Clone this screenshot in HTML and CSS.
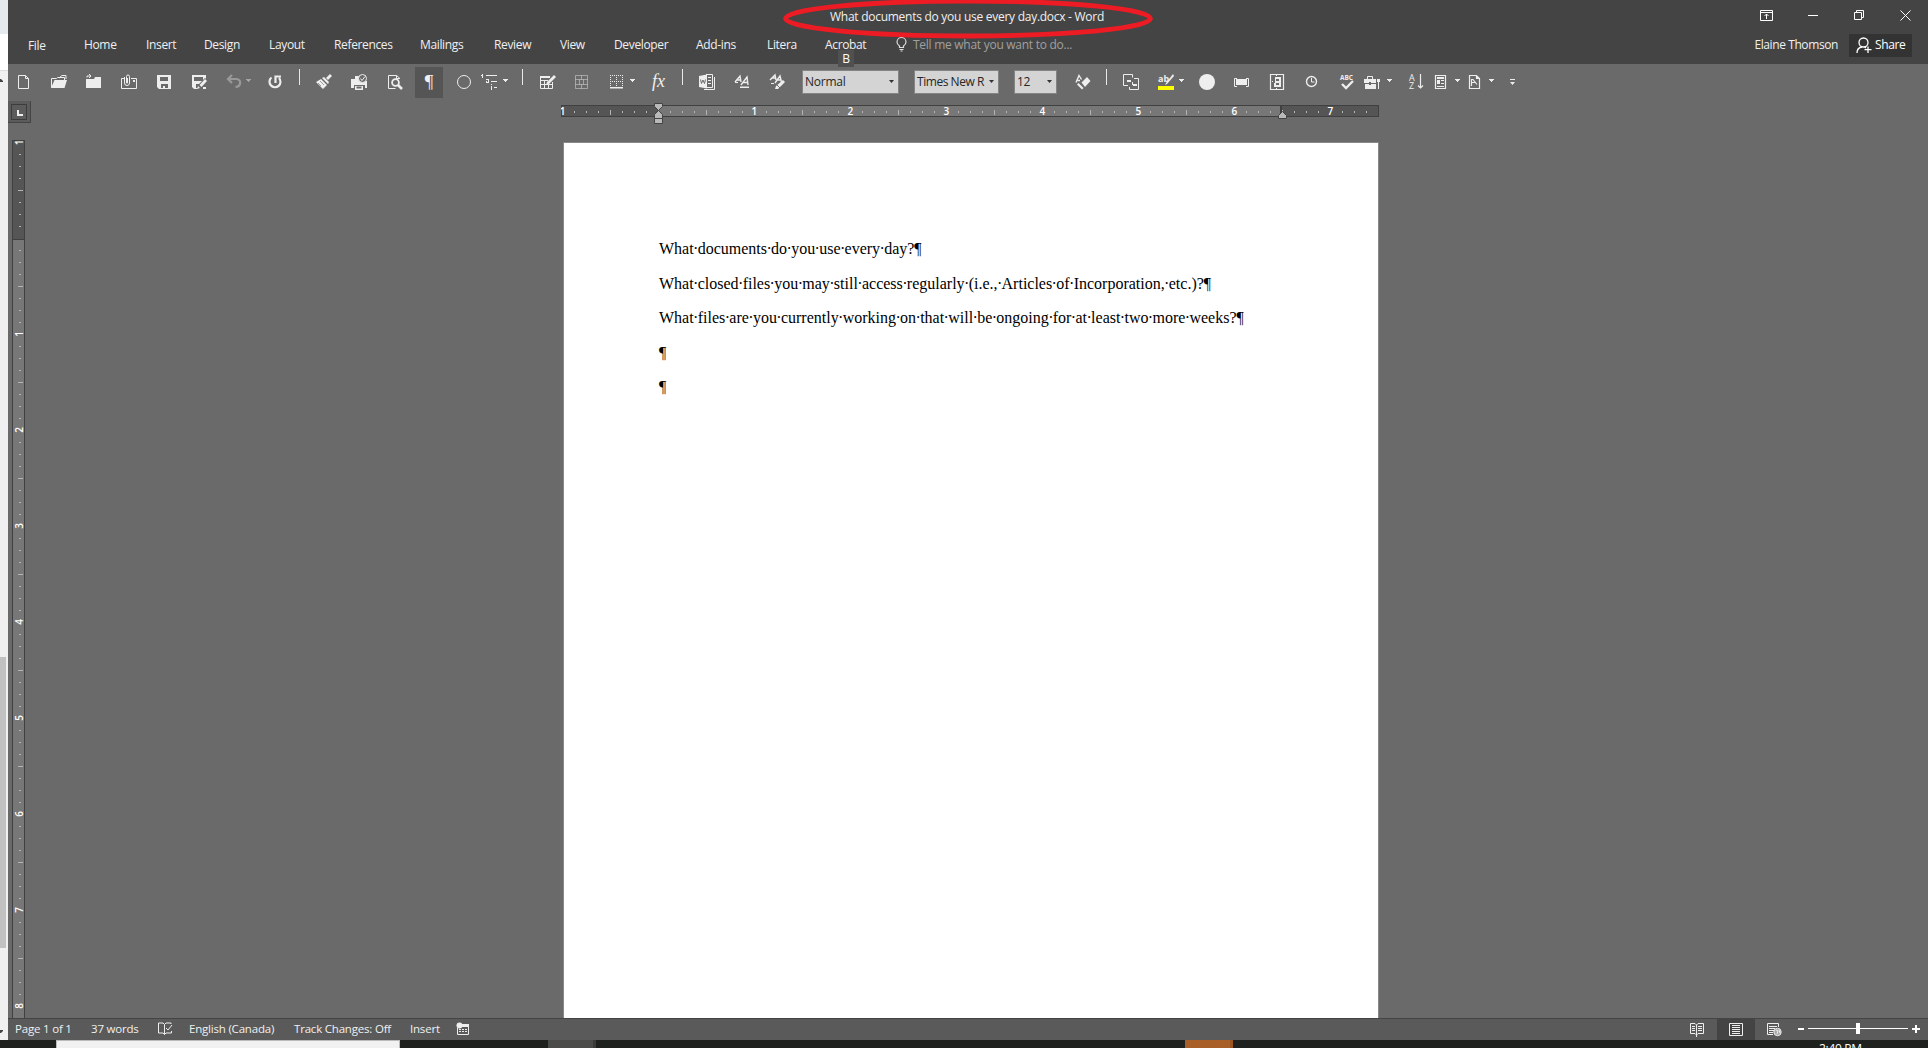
FILE: index.html
```html
<!DOCTYPE html>
<html lang="en">
<head>
    <meta charset="UTF-8">
    <title>What documents do you use every day.docx - Word</title>
    <link rel="stylesheet" href="styles.css">
</head>
<body>
    <svg class="defs" width="0" height="0">
        <symbol id="arrow" viewBox="0 0 7 4"><path fill="#eee" d="M0 0h5v1H4v1H3v1H2V2H1V1H0z"/></symbol>
        <pattern id="ticksH" width="96" height="25" patternUnits="userSpaceOnUse" x="1">
            <path fill="#b4b4b4" d="M12 10h1v2h-1zM24 10h1v2h-1zM36 10h1v2h-1zM48 9h1v5h-1zM60 10h1v2h-1zM72 10h1v2h-1zM84 10h1v2h-1z"/>
        </pattern>
        <pattern id="ticksV" width="13" height="96" patternUnits="userSpaceOnUse" y="2">
            <path fill="#b4b4b4" d="M7 12h2v1H7zM7 24h2v1H7zM7 36h2v1H7zM6 48h5v1H6zM7 60h2v1H7zM7 72h2v1H7zM7 84h2v1H7z"/>
        </pattern>
    </svg>

    <div class="screen">
        <div class="behind">
            <div class="behind-top"></div>
            <div class="behind-white"></div>
            <div class="scroll">
                <svg class="scroll-up" width="4" height="4"><path fill="#444" d="M0 0h1l2 2v1H0z"/></svg>
                <div class="scroll-thumb"></div>
                <svg class="scroll-down" width="4" height="4"><path fill="#444" d="M0 0h3v1L1 3H0z"/></svg>
            </div>
        </div>

        <div class="window">
            <header class="header">
                <div class="titlebar">
                    <span class="title">What documents do you use every day.docx - Word</span>
                    <div class="controls">
                        <svg width="13" height="11" fill="none" stroke="#fff"><path d="M.5.5h12v10H.5zM0 2.500h13M6.500 9V4M4.500 6l2-2 2 2"/></svg>
                        <svg width="10" height="11" stroke="#fff"><path d="M0 5.500h10"/></svg>
                        <svg width="10" height="11" fill="none" stroke="#fff"><path d="M.5 2.500h7v7h-7zM2.500 2V.5h7v7H8"/></svg>
                        <svg width="11" height="11" stroke="#fff"><path d="M.5.5l10 10M10.500.5l-10 10"/></svg>
                    </div>
                </div>
                <div class="tabs-row">
                    <nav class="tabs">
                        <span class="file">File</span>
                        <span>Home</span>
                        <span>Insert</span>
                        <span>Design</span>
                        <span>Layout</span>
                        <span>References</span>
                        <span>Mailings</span>
                        <span>Review</span>
                        <span>View</span>
                        <span>Developer</span>
                        <span>Add-ins</span>
                        <span>Litera</span>
                        <span class="acrobat">Acrobat<b class="keytip">B</b></span>
                        <svg width="11" height="15" fill="none" stroke="#ddd" stroke-width="1.2"><path d="M3.500 10.500V9C2 8 1 6.500 1 5a4.500 4.500 0 0 1 9 0c0 1.500-1 3-2.500 4v1.500zM3.500 12.500h4M4.500 14h2"/></svg>
                        <span class="tellme">Tell me what you want to do...</span>
                    </nav>
                    <div class="account">
                        <span class="user">Elaine Thomson</span>
                        <div class="share">
                            <svg width="16" height="17" fill="none" stroke="#fff" stroke-width="1.300"><circle cx="7.500" cy="5.500" r="4.500"/><path d="M1 16c0-3.500 2-5.500 5-6M8.500 10l1.500 1M12 9.500v6.500M8.500 12.700h7"/></svg>
                            <span>Share</span>
                        </div>
                    </div>
                </div>
            </header>

            <div class="toolbar">
                <svg class="ic" viewBox="0 0 16 16"><path class="l" d="M2.500 1.500h7l3 3v10h-10zM9.500 1.500v3h3"/></svg>
                <svg class="ic" viewBox="0 0 16 16"><path class="l" d="M.5 13.500v-9h5l1-1h7v3"/><path class="l" d="M8 4l3-2.500h4V5"/><path class="f" d="M3.500 6H16l-2.500 8H0z"/></svg>
                <svg class="ic" viewBox="0 0 16 16"><path class="f" d="M0 5h8l1-2h6v11H0z"/><path class="l" d="M1 3.500V2h4M3 0l2 2-2 2"/></svg>
                <svg class="ic" viewBox="0 0 16 16"><path class="l" d="M3 4.500H.5v10h15v-10H10"/><path class="l" d="M3.500 3v6a2.500 2.500 0 0 0 5 0V2.500a1.500 1.500 0 0 0-3 0V9h1V4"/><path class="f" d="M12 6h2v2h-2z"/></svg>
                <svg class="ic" viewBox="0 0 16 16"><path class="f" d="M1 1h14v14H3l-2-2zM4 3v4h8V3zM5 10v4h2v-2h2v2h3v-4z" fill-rule="evenodd"/></svg>
                <svg class="ic" viewBox="0 0 16 16"><path class="f" d="M0 1h14v4L9 10H4v4h2v1H2l-2-2zM2 3v4h9V3z" fill-rule="evenodd"/><path d="M5 15l1-4 7-7 3 3-7 7z" fill="#6a6a6a"/><path class="f" d="M5 15l1-3 2 2zM7.500 11l5.500-6 2 2-5.500 6zM11 13h3v2h-3z"/></svg>
                <svg class="ic" viewBox="0 0 16 16"><path d="M6 1L2 5l4 4M2.500 5h8c5 0 5 7.500-1 8" fill="none" stroke="#999" stroke-width="2.200"/></svg>
                <svg class="ar dim" viewBox="0 0 7 4"><use href="#arrow"/></svg>
                <svg class="ic" viewBox="0 0 16 16"><path d="M4.500 3.500a5.500 5.500 0 1 0 7.500.5M8.500 9V2.500H14" fill="none" stroke="#eee" stroke-width="2.200"/></svg>
                <i class="sep"></i>
                <svg class="ic" viewBox="0 0 16 16"><path class="f" d="M0 8l5-3 6 6-4 4zM6 4l2-1 5 5-1 2zM10 4l4-4 2 2-4 4z"/><path d="M2 9l3 3M4 7l4 4" stroke="#6a6a6a" stroke-width=".6"/></svg>
                <svg class="ic" viewBox="0 0 16 16"><path class="f" d="M0 5h4V2h4v5h8v7h-2v-3H3v3H0zM4 12h8v4H4z"/><path d="M5.500 12.500h5v2h-5z" fill="#6a6a6a"/><circle cx="11.500" cy="4.500" r="4" fill="#6a6a6a" stroke="#eee"/><path class="l" d="M9.500 4.500l1.500 2 3-4"/></svg>
                <svg class="ic" viewBox="0 0 16 16"><path class="l" d="M12.500 5V4l-3-2.500h-8v13h7M9.500 1.500v3h3"/><circle cx="8.500" cy="8.500" r="3.400" fill="none" stroke="#eee" stroke-width="1.800"/><path d="M11 11l4 4" stroke="#eee" stroke-width="2.500"/></svg>
                <span class="pilcrow">¶</span>
                <svg class="ic" viewBox="0 0 16 16"><circle class="l" cx="8" cy="8" r="6.500"/></svg>
                <svg class="ic" viewBox="0 0 16 16"><path class="f" d="M1 0h1v4H1zM0 1h1v1H0zM5 5h3v4H5V7h2V6H5zM10 10h1v1h-1zM10 12h1v4h-1zM5 1h11v1H5zM10 7h6v1h-6zM13 13h3v1h-3z"/><path d="M6 7h1v1H6z" fill="#6a6a6a"/></svg>
                <svg class="ar" viewBox="0 0 7 4"><use href="#arrow"/></svg>
                <i class="sep"></i>
                <svg class="ic" viewBox="0 0 16 16"><path class="l" d="M10 2.500H.5v12h12V8M1 6.500h7M1 10.500h11M4.500 7v7M8.500 10v4"/><path class="f" d="M0 2h10v2H0z"/><path d="M6 11l1-3 7-7 2 2-7 7z" class="f"/></svg>
                <svg class="ic dim" viewBox="0 0 16 16"><path class="l" d="M1.500 1.500h12v13h-12zM1.500 5.500h12M1.500 10.500h12M7.500 1.500v4M5.500 5.500v5M9.500 5.500v5M7.500 10.500v4"/></svg>
                <svg class="ic" viewBox="0 0 16 16"><path d="M1 1.500h13M1 7.500h13M1.500 1v13M7.500 1v13M13.500 1v13" stroke="#eee" stroke-dasharray="1 1" fill="none"/><path class="f" d="M1 13h13v1.500H1z"/></svg>
                <svg class="ar" viewBox="0 0 7 4"><use href="#arrow"/></svg>
                <span class="fx">fx</span>
                <i class="sep"></i>
                <svg class="ic" viewBox="0 0 16 16"><path class="l" d="M7 .5h6.500v13H7M15.500 3v12.500H5M9 3.500h3M9 6.500h3M9 9.500h3"/><path class="f" d="M0 2l8-1.500v14L0 13z"/><path d="M1.500 5.500l1 4 1.500-3.500 1.500 3.500 1-4" fill="none" stroke="#6a6a6a"/></svg>
                <svg class="ic" viewBox="0 0 16 16"><path class="l" d="M1 8l5-6 1 6M3 6h3M7 11l6-8 1 8M9 8.500h4.500" stroke-width="1.400"/><path class="f" d="M6 12.500h9v1.500H6zM1 8h3v1H1z"/></svg>
                <svg class="ic" viewBox="0 0 16 16"><path class="l" d="M1 6l5-5 1 5M3 4h3M6 9l5-7 1.500 6M8 6h4" stroke-width="1.400"/><path class="f" d="M6 15l1-3 7-6 2 2-7 7zM2 9h3v1H2z"/><path d="M8 11l3 3" stroke="#6a6a6a"/></svg>
                <div class="combo"><span>Normal</span><svg viewBox="0 0 7 4"><path d="M1 0h5L3.500 3z"/></svg></div>
                <div class="combo times"><span>Times New R</span><svg viewBox="0 0 7 4"><path d="M1 0h5L3.500 3z"/></svg></div>
                <div class="combo size"><span>12</span><svg viewBox="0 0 7 4"><path d="M1 0h5L3.500 3z"/></svg></div>
                <svg class="ic" viewBox="0 0 16 16"><path class="l" d="M1 8.500L4 1.500l2.500 4M2.500 6.500H5" stroke-width="1.400"/><path class="f" d="M6.500 8.500L12 3l3.500 4-5.500 6zM2 10.500l1.500-1.500 5 5-1.500 1.500z"/></svg>
                <i class="sep"></i>
                <svg class="ic" viewBox="0 0 16 16"><path class="l" d="M5 11.500H.5V.5h9v3M9.500 8v3M11 4.500h4.500v11h-9V13"/><path class="f" d="M4 6h4v2H4zM10 10h4v2h-4z"/></svg>
                <svg class="ic" viewBox="0 0 16 16"><text class="small-text" x="0" y="7.500">ab</text><path class="f" d="M15 0l1 2-7 8-2 1 1-2z"/><path fill="#ff0" d="M0 12h16v4H0z"/></svg>
                <svg class="ar" viewBox="0 0 7 4"><use href="#arrow"/></svg>
                <svg class="ic" viewBox="0 0 16 16"><circle class="f" cx="8" cy="8" r="8"/></svg>
                <svg class="ic" viewBox="0 0 16 16"><path class="f" d="M3 5h11v6H3z"/><path class="l" d="M4 4.500H1.500v8H4M13 4.500h2.500v8H13"/></svg>
                <svg class="ic" viewBox="0 0 16 16"><path class="l" d="M1.500.5h13v15h-13z" stroke-width="1.200"/><path class="f" d="M6 3h6v10H5V9h1zM7 1h1v1H7zM7 14h1v1H7zM3 7h1v1H3z"/><path d="M7 5h3v2H7zM7 9h3v2H7z" fill="#6a6a6a"/></svg>
                <svg class="ic" viewBox="0 0 16 16"><circle class="l" cx="7.500" cy="7.500" r="5" stroke-width="1.400"/><path class="l" d="M7.500 4v4h3"/></svg>
                <svg class="ic" viewBox="0 0 16 16"><text class="abc" x="0" y="5.500">ABC</text><path d="M2 10l4 4 7-7" fill="none" stroke="#eee" stroke-width="2.300"/></svg>
                <svg class="ic" viewBox="0 0 16 16"><path class="f" d="M0 5h12v4H0zM1 10h11v5H1z"/><path class="l" d="M3.500 5V2.500h5V5"/><path class="f" d="M13 5h3v3h-1v7h-1V8h-1z"/><path d="M5 8h2v3H5z" fill="#6a6a6a"/></svg>
                <svg class="ar" viewBox="0 0 7 4"><use href="#arrow"/></svg>
                <svg class="ic" viewBox="0 0 16 16"><text class="az" x="1" y="6.500">A</text><text class="az" x="1" y="15">Z</text><path class="l" d="M12.500 0v14M10 11.500l2.500 2.500 2.500-2.500" stroke-width="1.200"/></svg>
                <svg class="ic" viewBox="0 0 16 16"><path class="l" d="M1.500 1.500h10v13h-10z" stroke-width="1.200"/><path class="f" d="M3 3h7v2H3zM3 6h3v4H3zM7 6h3v1H7zM7 9h3v1H7zM3 12h7v1H3z"/></svg>
                <svg class="ar" viewBox="0 0 7 4"><use href="#arrow"/></svg>
                <svg class="ic" viewBox="0 0 16 16"><path class="l" d="M1.500 1.500h7l3 3v10h-10zM8.500 1.500v3h3M3.500 12V5.500h1.500l4 5M4 8.500h3" stroke-width="1.200"/></svg>
                <svg class="ar" viewBox="0 0 7 4"><use href="#arrow"/></svg>
                <svg class="more" viewBox="0 0 7 6"><path class="f" d="M1 0h5v1H1zM1 3h5L3.500 6z"/></svg>
            </div>

            <div class="ruler-row">
                <div class="tab-selector"><svg width="16" height="16"><path fill="none" stroke="#3c3c3c" d="M.5.5h15v15H.5z"/><path fill="#eee" d="M6 6h2v4h4v2H6z"/></svg></div>
                <svg class="hruler" width="820" height="25">
                    <rect x=".5" y="4.500" width="817" height="11" fill="#555" stroke="#404040"/>
                    <rect x="98" y="5" width="622" height="10" fill="#777"/>
                    <rect x="1" y="5" width="815" height="10" fill="url(#ticksH)"/>
                    <g class="nums">
                        <text x="1.500" y="14">1</text>
                        <text x="193.300" y="14">1</text>
                        <text x="289.300" y="14">2</text>
                        <text x="385.300" y="14">3</text>
                        <text x="481.300" y="14">4</text>
                        <text x="577.300" y="14">5</text>
                        <text x="673.300" y="14">6</text>
                        <text x="769.300" y="14">7</text>
                    </g>
                    <path fill="#404040" d="M719 4h2v12h-2z"/>
                    <g fill="#b9b9b9" stroke="#444">
                        <path d="M93.500 2.500h8v3l-4 4-4-4zM93.500 17.500v-4l4-4 4 4v4zM93.500 17.500h8v5h-8zM717.500 17.500v-3l4-4 4 4v3z"/>
                    </g>
                </svg>
            </div>

            <main class="workspace">
                <svg class="vruler" width="13" height="878">
                    <path fill="#777" d="M0 0h13v878H0z"/>
                    <path fill="#555" d="M0 0h13v99H0z"/>
                    <path fill="none" stroke="#404040" d="M.5 878V.5h12V878"/>
                    <rect y="2" width="13" height="876" fill="url(#ticksV)"/>
                    <path fill="#404040" d="M1 99h11v1H1z"/>
                    <g class="nums">
                        <text transform="translate(11 2.500) rotate(-90)">1</text>
                        <text transform="translate(11 194) rotate(-90)">1</text>
                        <text transform="translate(11 290) rotate(-90)">2</text>
                        <text transform="translate(11 386) rotate(-90)">3</text>
                        <text transform="translate(11 482) rotate(-90)">4</text>
                        <text transform="translate(11 578) rotate(-90)">5</text>
                        <text transform="translate(11 674) rotate(-90)">6</text>
                        <text transform="translate(11 770) rotate(-90)">7</text>
                        <text transform="translate(11 866) rotate(-90)">8</text>
                    </g>
                </svg>
                <article class="page">
                    <p>What<i>·</i>documents<i>·</i>do<i>·</i>you<i>·</i>use<i>·</i>every<i>·</i>day?¶</p>
                    <p>What<i>·</i>closed<i>·</i>files<i>·</i>you<i>·</i>may<i>·</i>still<i>·</i>access<i>·</i>regularly<i>·</i>(i.e.,<i>·</i>Articles<i>·</i>of<i>·</i>Incorporation,<i>·</i>etc.)?¶</p>
                    <p>What<i>·</i>files<i>·</i>are<i>·</i>you<i>·</i>currently<i>·</i>working<i>·</i>on<i>·</i>that<i>·</i>will<i>·</i>be<i>·</i>ongoing<i>·</i>for<i>·</i>at<i>·</i>least<i>·</i>two<i>·</i>more<i>·</i>weeks?¶</p>
                    <p>¶</p>
                    <p>¶</p>
                </article>
            </main>

            <footer class="status">
                <div class="status-left">
                    <span>Page 1 of 1</span>
                    <span>37 words</span>
                    <svg width="15" height="14" fill="none" stroke="#eee"><path d="M6.500 2.500L5 1H.5v10H5l1.500 1.500L8 11h5.500V9M6.500 2.500v10M6.500 2.500L8 1h5v1M8 6l2 2 4-5"/></svg>
                    <span>English (Canada)</span>
                    <span>Track Changes: Off</span>
                    <span>Insert</span>
                    <svg width="14" height="14"><path fill="none" stroke="#eee" d="M1.500 6v6.500h11v-10H7"/><path fill="#eee" d="M6 2h7v3H6zM3 7h2v1H3zM6 7h2v1H6zM9 7h2v1H9zM3 9h2v1H3zM6 9h2v1H6zM9 9h2v1H9z"/><circle cx="3.500" cy="3.500" r="3" fill="#eee"/></svg>
                </div>
                <div class="status-right">
                    <svg class="read" width="14" height="14" fill="none" stroke="#eee"><path d="M6.500 2L5 .5H.5v10H5L6.500 12 8 10.500h5.500V.5H8zM6.500 2v12M2 3.500h3M2 5.500h3M2 7.500h3M8 3.500h4M8 5.500h4M8 7.500h4"/></svg>
                    <div class="view-active"><svg width="14" height="13" fill="none" stroke="#eee"><path d="M.5.500h13v12H.5zM3 2.500h8M3 4.500h8M3 6.500h8M3 8.500h8M3 10.500h8"/></svg></div>
                    <svg class="web" width="15" height="14" fill="none" stroke="#eee"><path d="M6 11.500H.5V.5h11V4M2 3.500h8M2 5.500h6M2 7.500h5M2 9.500h4"/><circle cx="10.500" cy="9" r="3.700" fill="#aaa"/><path d="M9 7l2 1-1 3M12 7l1 3"/></svg>
                    <svg class="zoom" width="122" height="12" fill="#fff"><path d="M0 5h6v2H0zM10 5h100v1H10zM58 0h4v11h-4zM114 5h8v2h-8zM117 2h2v8h-2z"/></svg>
                </div>
            </footer>
        </div>

        <div class="taskbar">
            <div class="task-search"></div>
            <div class="task-app"></div>
            <div class="task-orange"></div>
            <div class="clock">2:40 PM</div>
        </div>

        <svg class="circled" width="376" height="44"><ellipse cx="188" cy="21.500" rx="182.500" ry="17.500" fill="none" stroke="#ed1c24" stroke-width="4.800"/></svg>
    </div>
</body>
</html>
```
FILE: styles.css
```css
* {
    box-sizing: border-box;
}

body {
    margin: 0;
    font-family: "Open Sans", "Noto Sans", sans-serif;
    font-size: 12px;
    color: #f0f0f0;
    overflow: hidden;
}

svg {
    display: block;
    flex: none;
}

.defs {
    position: absolute;
}

.screen {
    position: relative;
    width: 1928px;
    height: 1048px;
    display: grid;
    grid-template: 1040px 8px / 8px 1920px;
    overflow: hidden;
}

/* window behind, left edge */
.behind {
    display: flex;
    flex-direction: column;
}

.behind-top {
    height: 34px;
    background: #e5eaee;
}

.behind-white {
    height: 37px;
    background: #fff;
    border-bottom: 1px solid #dcdcdc;
}

.scroll {
    flex: 1;
    display: flex;
    flex-direction: column;
    background: #f0f0f0;
    padding-top: 8px;
}

.scroll-thumb {
    width: 6px;
    height: 291px;
    margin-top: 574px;
    background: #c1c1c1;
}

.scroll-down {
    margin-top: 82px;
}

.window {
    display: flex;
    flex-direction: column;
    background: #6a6a6a;
}

.header {
    height: 64px;
    background: #444;
}

.titlebar {
    height: 29px;
    display: flex;
    align-items: center;
    justify-content: space-between;
    padding: 2px 18px 0 822px;
}

.title {
    letter-spacing: -0.27px;
    padding-top: 1px;
}

.controls {
    display: grid;
    grid-template-columns: 48px 46px 46px 10px;
}

.tabs-row {
    height: 35px;
    display: flex;
    justify-content: space-between;
    padding-right: 16px;
}

.tabs {
    height: 30px;
    display: grid;
    grid-template-columns: 56px 62px 58px 65px 65px 86px 74px 66px 54px 82px 71px 58px 71px 17px 170px;
    padding-left: 20px;
    align-items: center;
    letter-spacing: -0.35px;
    white-space: nowrap;
}

.file {
    padding-top: 2px;
}

.acrobat {
    position: relative;
}

.keytip {
    position: absolute;
    left: 13px;
    top: 14px;
    width: 16px;
    height: 17px;
    line-height: 17px;
    background: #505050;
    font-weight: 400;
    text-align: center;
    color: #fff;
}

.tellme {
    color: #a0a0a0;
    letter-spacing: -0.27px;
}

.account {
    height: 32px;
    display: flex;
    align-items: center;
    gap: 11px;
    letter-spacing: -0.4px;
}

.account span {
    padding-bottom: 2px;
}

.share {
    width: 63px;
    height: 23px;
    background: #333;
    color: #fff;
    display: flex;
    align-items: center;
    gap: 3px;
    padding-left: 7px;
}

.toolbar {
    height: 36px;
    display: grid;
    grid-template-columns: 35px 35px 35px 35px 36px 34px 20px 21px 32px 17px 35px 36px 28px 41px 25px 22px 19px 18px 34px 35px 21px 20px 32px 17px 35px 35px 33px 112px 100px 61px 31px 17px 35px 21px 20px 34px 36px 35px 36px 24px 23px 21px 26px 21px 13px 21px 20px 20px;
    padding-left: 8px;
    align-items: center;
}

.ic {
    width: 16px;
    height: 16px;
    overflow: visible;
}

.ar {
    width: 7px;
    height: 4px;
    margin-bottom: 2px;
}

.more {
    width: 7px;
    height: 6px;
}

.dim {
    opacity: 0.45;
}

.l {
    fill: none;
    stroke: #eee;
}

.f {
    fill: #eee;
}

.sep {
    width: 1px;
    height: 16px;
    margin-bottom: 10px;
    background: #e8e8e8;
}

.pilcrow {
    width: 28px;
    height: 31px;
    line-height: 29px;
    background: #555;
    text-align: center;
    font-family: "Liberation Serif", serif;
    font-size: 19px;
}

.fx {
    font: italic 18px/18px "Liberation Serif", serif;
    margin: -3px 0 0 2px;
}

.small-text {
    font-size: 9px;
    font-weight: 700;
    fill: #eee;
}

.abc {
    font-size: 6.5px;
    font-weight: 700;
    fill: #eee;
}

.az {
    font-size: 9px;
    fill: #eee;
}

.combo {
    width: 97px;
    height: 24px;
    background: #d4d4d4;
    border: 1px solid #848484;
    color: #262626;
    display: flex;
    align-items: center;
    justify-content: space-between;
    padding: 0 3px 0 2px;
    white-space: nowrap;
    letter-spacing: -0.25px;
}

.combo span {
    padding-bottom: 2px;
}

.combo svg {
    width: 7px;
    height: 4px;
    fill: #333;
}

.times {
    width: 85px;
    letter-spacing: -0.45px;
}

.size {
    width: 43px;
}

.ruler-row {
    height: 40px;
    display: flex;
    padding-top: 1px;
}

.tab-selector {
    width: 23px;
    height: 22px;
    padding: 3px;
    background: #5c5c5c;
    border-right: 1px solid #444;
    border-bottom: 1px solid #444;
}

.hruler {
    margin-left: 530px;
}

.nums {
    font-size: 10px;
    font-weight: 600;
    fill: #fff;
    text-anchor: middle;
}

.workspace {
    height: 878px;
    display: flex;
    align-items: flex-start;
    padding-left: 4px;
}

.page {
    width: 816px;
    height: 876px;
    margin: 2px 0 0 538px;
    padding: 89px 0 0 95px;
    background: #fff;
    border: 1px solid #888;
    border-bottom: 0;
    color: #000;
    font-family: "Liberation Serif", "Times New Roman", serif;
    font-size: 16px;
    line-height: 34.5px;
    white-space: nowrap;
}

.page p {
    margin: 0;
}

.page i {
    font-style: normal;
    margin-left: -0.6px;
    letter-spacing: -0.7px;
}

.status {
    height: 22px;
    background: #5a5a5a;
    border-top: 1px solid #444;
    display: flex;
    justify-content: space-between;
}

.status-left {
    display: grid;
    grid-template-columns: 76px 67px 31px 105px 116px 46px 14px;
    align-items: center;
    padding-left: 7px;
    white-space: nowrap;
    font-size: 11.5px;
    letter-spacing: -0.2px;
}

.status-left span {
    padding-bottom: 3px;
}

.status-left svg {
    margin-bottom: 2px;
}

.status-right {
    display: flex;
    align-items: center;
    padding-right: 8px;
}

.view-active {
    width: 38px;
    height: 21px;
    margin: 0 12px 0 13px;
    display: flex;
    align-items: center;
    justify-content: center;
    background: #444;
}

.zoom {
    margin: 0 0 1px 16px;
}

.taskbar {
    grid-column: 1 / 3;
    display: flex;
    background: #1f211f;
    overflow: hidden;
}

.task-search {
    width: 344px;
    margin-left: 56px;
    background: #f1f1f1;
    border: 1px solid #bbb;
    border-bottom: 0;
}

.task-app {
    width: 48px;
    margin-left: 148px;
    background: #4b4b49;
    border-right: 3px solid #3b3b3a;
}

.task-orange {
    width: 48px;
    margin-left: 589px;
    background: #a85f28;
    border-right: 3px solid #9a5522;
}

.clock {
    margin: 3px 0 0 586px;
    color: #fff;
    line-height: 12px;
    letter-spacing: -0.3px;
    white-space: nowrap;
}

/* hand drawn highlight over the title */
.circled {
    position: absolute;
    left: 780px;
    top: -3px;
}
```
